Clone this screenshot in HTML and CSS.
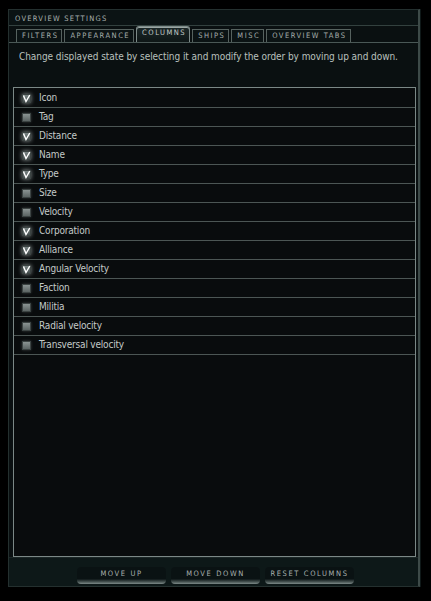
FILE: index.html
```html
<!DOCTYPE html>
<html>
<head>
<meta charset="utf-8">
<link rel="stylesheet" href="styles.css">
</head>
<body>
<div class="window">
  <div class="titlebar">OVERVIEW SETTINGS</div>
  <div class="tabs">
    <div class="tab">FILTERS</div>
    <div class="tab">APPEARANCE</div>
    <div class="tab active">COLUMNS</div>
    <div class="tab">SHIPS</div>
    <div class="tab">MISC</div>
    <div class="tab">OVERVIEW TABS</div>
  </div>
  <div class="desc">Change displayed state by selecting it and modify the order by moving up and down.</div>
  <div class="list">
    <div class="row"><span class="cb on"><svg viewBox="0 0 9 9" width="9" height="9"><path d="M1.5 1.5 L4 7.5 L7.8 1" fill="none" stroke="#fff" stroke-width="1.4"/></svg></span><span class="label">Icon</span></div>
    <div class="row"><span class="cb"></span><span class="label">Tag</span></div>
    <div class="row"><span class="cb on"><svg viewBox="0 0 9 9" width="9" height="9"><path d="M1.5 1.5 L4 7.5 L7.8 1" fill="none" stroke="#fff" stroke-width="1.4"/></svg></span><span class="label">Distance</span></div>
    <div class="row"><span class="cb on"><svg viewBox="0 0 9 9" width="9" height="9"><path d="M1.5 1.5 L4 7.5 L7.8 1" fill="none" stroke="#fff" stroke-width="1.4"/></svg></span><span class="label">Name</span></div>
    <div class="row"><span class="cb on"><svg viewBox="0 0 9 9" width="9" height="9"><path d="M1.5 1.5 L4 7.5 L7.8 1" fill="none" stroke="#fff" stroke-width="1.4"/></svg></span><span class="label">Type</span></div>
    <div class="row"><span class="cb"></span><span class="label">Size</span></div>
    <div class="row"><span class="cb"></span><span class="label">Velocity</span></div>
    <div class="row"><span class="cb on"><svg viewBox="0 0 9 9" width="9" height="9"><path d="M1.5 1.5 L4 7.5 L7.8 1" fill="none" stroke="#fff" stroke-width="1.4"/></svg></span><span class="label">Corporation</span></div>
    <div class="row"><span class="cb on"><svg viewBox="0 0 9 9" width="9" height="9"><path d="M1.5 1.5 L4 7.5 L7.8 1" fill="none" stroke="#fff" stroke-width="1.4"/></svg></span><span class="label">Alliance</span></div>
    <div class="row"><span class="cb on"><svg viewBox="0 0 9 9" width="9" height="9"><path d="M1.5 1.5 L4 7.5 L7.8 1" fill="none" stroke="#fff" stroke-width="1.4"/></svg></span><span class="label">Angular Velocity</span></div>
    <div class="row"><span class="cb"></span><span class="label">Faction</span></div>
    <div class="row"><span class="cb"></span><span class="label">Militia</span></div>
    <div class="row"><span class="cb"></span><span class="label">Radial velocity</span></div>
    <div class="row"><span class="cb"></span><span class="label">Transversal velocity</span></div>
  </div>
  <div class="footer">
    <div class="btn">MOVE UP</div>
    <div class="btn">MOVE DOWN</div>
    <div class="btn">RESET COLUMNS</div>
  </div>
</div>
</body>
</html>
```
FILE: styles.css
```css
html, body {
  margin: 0;
  padding: 0;
  background: #000;
}
body {
  width: 431px;
  height: 601px;
  padding: 9px 0 0 8px;
  box-sizing: border-box;
  font-family: "DejaVu Sans Condensed", "DejaVu Sans", sans-serif;
}
.window {
  width: 412px;
  height: 578px;
  box-sizing: border-box;
  background: #0a1011;
  border: 1px solid #24302f;
  border-right: 2px solid #3d4a48;
  box-shadow: 1px 0 0 #0f1818;
  display: flex;
  flex-direction: column;
}
.titlebar {
  height: 16px;
  box-sizing: border-box;
  border-bottom: 1px solid #33413f;
  color: #a9b1af;
  font-size: 7.5px;
  letter-spacing: 1.25px;
  padding: 4px 0 0 6px;
  line-height: 9px;
  background: #0b1314;
}
.tabs {
  display: flex;
  align-items: flex-end;
  gap: 2px;
  height: 17px;
  box-sizing: border-box;
  padding-left: 7px;
  border-bottom: 1px solid #4a5856;
}
.tab {
  height: 13px;
  box-sizing: border-box;
  border: 1px solid #56625f;
  border-bottom: none;
  color: #a6aeac;
  font-size: 7.5px;
  letter-spacing: 1.5px;
  line-height: 12px;
  padding: 0 3px 0 5px;
  background: #0b1314;
}
.tab.active {
  height: 16px;
  border-color: #7d8a88;
  border-radius: 3px 3px 0 0;
  background: linear-gradient(#1c2828, #0e1616);
  color: #c2c9c7;
  line-height: 12px;
  box-shadow: inset 0 1px 0 #9aa6a4;
}
.desc {
  color: #b9c0be;
  font-size: 10px;
  letter-spacing: -0.07px;
  padding: 8px 0 0 10px;
  height: 44px;
  box-sizing: border-box;
}
.list {
  margin: 0 2px 0 4px;
  height: 470px;
  box-sizing: border-box;
  border: 1px solid #7b8886;
  background: #090c0d;
  padding-top: 1px;
}
.row {
  height: 19px;
  box-sizing: border-box;
  border-bottom: 1px solid #4c5654;
  display: flex;
  align-items: center;
  padding-left: 8px;
  gap: 8px;
}
.row:first-child {
  height: 19px;
}
.cb {
  width: 9px;
  height: 9px;
  box-sizing: border-box;
  background: linear-gradient(#8a9392, #5b6463);
  border: 1px solid #3c4443;
  box-shadow: 0 0 3px rgba(200,210,210,0.25);
  position: relative;
}
.cb svg {
  position: absolute;
  left: -1px;
  top: -1px;
  display: block;
}
.cb.on {
  background: linear-gradient(#7a8484, #454e4e);
  box-shadow: 0 0 4px rgba(220,230,230,0.6);
}
.label {
  color: #c4cac8;
  font-size: 10px;
  letter-spacing: -0.2px;
  line-height: 12px;
}
.footer {
  flex: 1;
  background: #0d1818;
  display: flex;
  justify-content: center;
  align-items: flex-start;
  gap: 5px;
  padding-top: 9px;
  padding-left: 4px;
  border-top: 1px solid #1b2626;
}
.btn {
  width: 89px;
  height: 17px;
  box-sizing: border-box;
  border-radius: 4px;
  background: linear-gradient(#0a1213 0%, #0a1213 70%, #3e4a49 85%, #7d8a88 100%);
  color: #a9b1af;
  font-size: 7.5px;
  letter-spacing: 1.6px;
  text-align: center;
  line-height: 13px;
}
```
